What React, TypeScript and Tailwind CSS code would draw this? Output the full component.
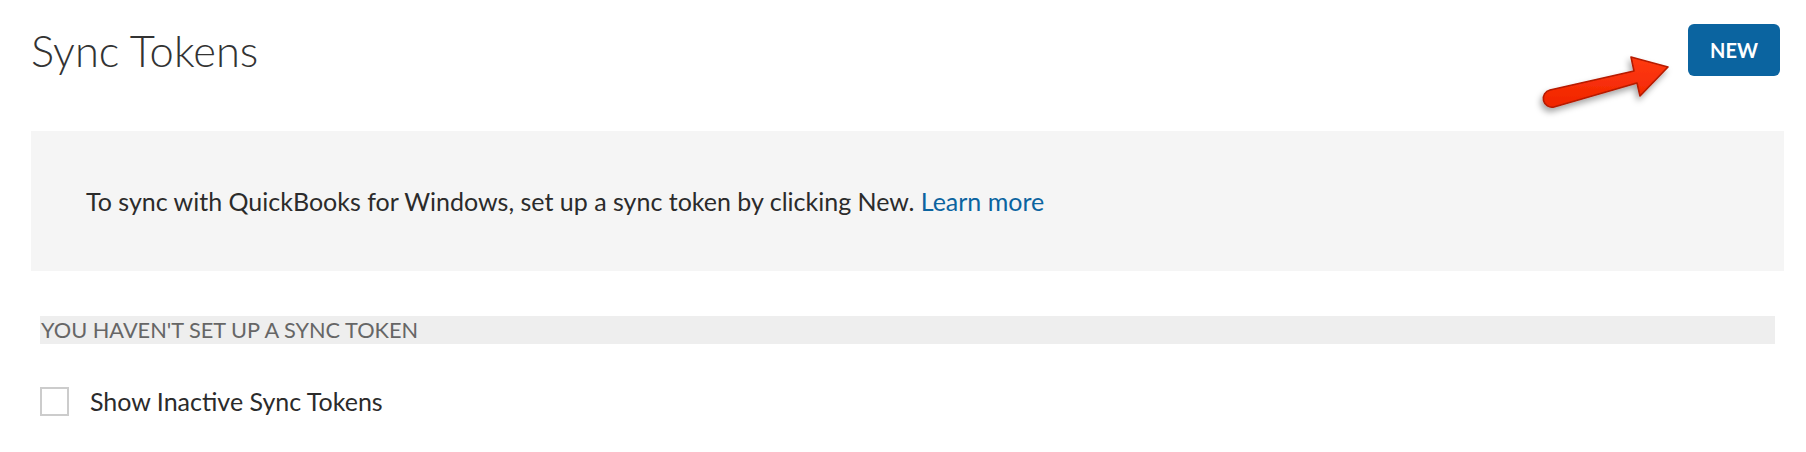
import { useState } from 'react'

const RedArrow = () => (
  <svg
    className="pointer-events-none absolute top-[50px] left-[1530px]"
    width={150}
    height={75}
    viewBox="0 0 150 75"
    aria-hidden
  >
    <defs>
      <filter id="arrowShadow" x="-20%" y="-30%" width="150%" height="180%">
        <feDropShadow dx="-2" dy="4" stdDeviation="3" floodColor="#000" floodOpacity="0.35" />
      </filter>
      <linearGradient id="arrowFill" x1="0" y1="0" x2="0" y2="1">
        <stop offset="0" stopColor="#ff3a10" />
        <stop offset="1" stopColor="#f02400" />
      </linearGradient>
    </defs>
    <path
      d="M 20 40 L 104 21 L 101 7 L 138 17 L 110 46 L 107 33 L 24 57 A 8.6 8.6 0 0 1 20 40 Z"
      fill="url(#arrowFill)"
      stroke="#b51a00"
      strokeWidth={1.6}
      strokeLinejoin="round"
      filter="url(#arrowShadow)"
    />
  </svg>
)

const App = () => {
  const [showInactive, setShowInactive] = useState(false)

  return (
    <div className="relative min-h-[452px] bg-white pr-[22px] pl-[27px] font-['Lato','Liberation_Sans',sans-serif] text-[#2b2b2b]">
      <RedArrow />

      <div className="flex items-start justify-between pt-[24px]">
        <h1 className="ml-[4px] text-[43.5px] leading-[53px] font-light text-[#333]">
          Sync Tokens
        </h1>
        <button
          type="button"
          className="mr-[4px] h-[52px] w-[92px] rounded-[6px] bg-[#0b64a0] text-[20px] font-bold text-white"
        >
          NEW
        </button>
      </div>

      <div className="mt-[54px] ml-[4px] flex h-[140px] items-center bg-[#f5f5f5] pl-[55px]">
        <p className="text-[25px] leading-[31px]">
          To sync with QuickBooks for Windows, set up a sync token by clicking New.{' '}
          <a href="#" className="text-[#0b64a0]">
            Learn more
          </a>
        </p>
      </div>

      <div className="mr-[9px] ml-[13px]">
        <div className="mt-[45px] h-[28px] bg-[#eeeeee] pl-[1px] text-[21.75px] leading-[28px] text-[#666]">
          YOU HAVEN'T SET UP A SYNC TOKEN
        </div>

        <label className="mt-[42px] flex cursor-pointer items-center gap-[21px]">
          <span
            onClick={() => setShowInactive(v => !v)}
            className="flex size-[29px] shrink-0 items-center justify-center border-2 border-[#cccccc] bg-white"
          >
            {showInactive && <span className="size-[13px] bg-[#0b64a0]" />}
          </span>
          <span className="text-[25px] leading-[31px]">Show Inactive Sync Tokens</span>
        </label>
      </div>
    </div>
  )
}

export default App
